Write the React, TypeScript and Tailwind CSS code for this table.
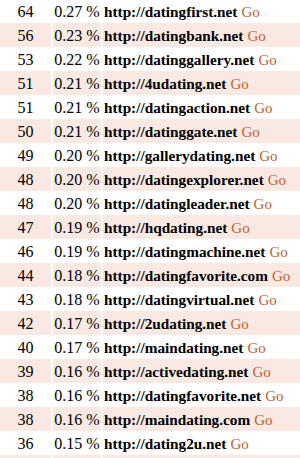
const rows: [number, string, string][] = [
  [64, "0.27", "datingfirst.net"],
  [56, "0.23", "datingbank.net"],
  [53, "0.22", "datinggallery.net"],
  [51, "0.21", "4udating.net"],
  [51, "0.21", "datingaction.net"],
  [50, "0.21", "datinggate.net"],
  [49, "0.20", "gallerydating.net"],
  [48, "0.20", "datingexplorer.net"],
  [48, "0.20", "datingleader.net"],
  [47, "0.19", "hqdating.net"],
  [46, "0.19", "datingmachine.net"],
  [44, "0.18", "datingfavorite.com"],
  [43, "0.18", "datingvirtual.net"],
  [42, "0.17", "2udating.net"],
  [40, "0.17", "maindating.net"],
  [39, "0.16", "activedating.net"],
  [38, "0.16", "datingfavorite.net"],
  [38, "0.16", "maindating.com"],
  [36, "0.15", "dating2u.net"],
  [0, "", ""],
];

export default function App() {
  return (
    <div className="w-[300px] h-[458px] overflow-hidden bg-white font-['Liberation_Serif',serif] text-[16px] text-black">
      <div className="-mt-[1px] flex flex-col gap-[2px]">
        {rows.map(([count, pct, site], i) => (
          <div
            key={i}
            className="grid grid-cols-[51px_48px_1fr] gap-x-[2px] h-[22px]"
          >
            <div
              className={`flex items-center justify-center pt-[1px] ${i % 2 ? "bg-[#fae8e2]" : "bg-white"}`}
            >
              {count || ""}
            </div>
            <div
              className={`flex items-center justify-center pt-[1px] whitespace-nowrap ${i % 2 ? "bg-[#fae8e2]" : "bg-white"}`}
            >
              {pct && `${pct} %`}
            </div>
            <div
              className={`flex items-center pl-[1px] pt-[1px] whitespace-nowrap ${i % 2 ? "bg-[#fae8e2]" : "bg-white"}`}
            >
              {site && (
                <>
                  <b className="text-[15.25px]">http://{site}</b>
                  <a className="ml-[4px] text-[#c8602a] text-[15px]">Go</a>
                </>
              )}
            </div>
          </div>
        ))}
      </div>
    </div>
  );
}
